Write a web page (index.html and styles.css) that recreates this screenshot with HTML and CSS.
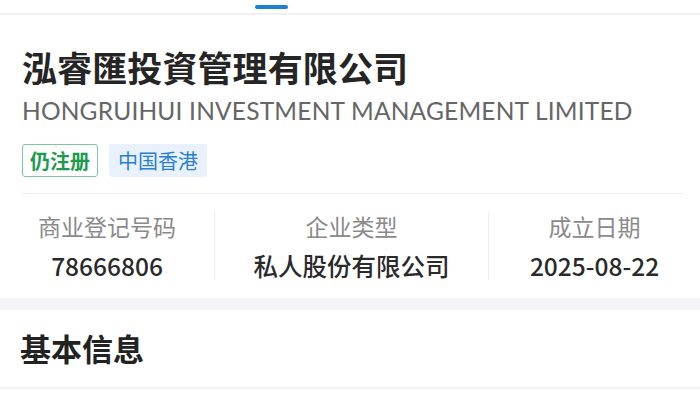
FILE: index.html
```html
<!DOCTYPE html>
<html lang="zh">

<head>
    <meta charset="utf-8">
    <title>泓睿匯投資管理有限公司</title>
    <link rel="stylesheet" href="styles.css">
</head>

<body>
    <div class="tabs">
        <span class="tab-line"></span>
    </div>

    <div class="company">
        <h1 class="name">泓睿匯投資管理有限公司</h1>
        <div class="name-en">HONGRUIHUI INVESTMENT MANAGEMENT LIMITED</div>
        <div class="tags">
            <span class="tag tag-green">仍注册</span>
            <span class="tag tag-blue">中国香港</span>
        </div>

        <div class="stats">
            <div class="stat">
                <span class="stat-label">商业登记号码</span>
                <span class="stat-value">78666806</span>
            </div>
            <div class="stat">
                <span class="stat-label">企业类型</span>
                <span class="stat-value">私人股份有限公司</span>
            </div>
            <div class="stat">
                <span class="stat-label">成立日期</span>
                <span class="stat-value">2025-08-22</span>
            </div>
        </div>
    </div>

    <div class="section">
        <h2>基本信息</h2>
    </div>
</body>
</html>
```

FILE: styles.css
```css
body {
    margin: 0;
    background-color: #fff;
    font-family: "Noto Sans CJK SC", "Noto Sans", sans-serif;
    color: #222;
    overflow: hidden;
}

.tabs {
    height: 13px;
    border-bottom: 2px solid #f1f1f1;
    position: relative;
}

.tab-line {
    position: absolute;
    left: 255px;
    top: 5px;
    width: 33px;
    height: 4px;
    border-radius: 2px;
    background-color: #1e7fd6;
}

.company {
    padding: 0 16px;
    border-bottom: 12px solid #f5f4f7;
}

.name {
    margin: 32px 0 0 6px;
    font-size: 35px;
    line-height: 40px;
    font-weight: bold;
    color: #252525;
    letter-spacing: 0.1px;
}

.name-en {
    margin: 10px 0 0 6px;
    font-family: "Lato", "Noto Sans", sans-serif;
    font-size: 24.5px;
    line-height: 28px;
    color: #666;
    letter-spacing: 0.2px;
}

.tags {
    display: flex;
    gap: 11px;
    margin: 19px 0 0 6px;
    padding-bottom: 16px;
    border-bottom: 1px solid #efefef;
}

.tag {
    height: 33px;
    line-height: 33px;
    font-size: 20px;
    padding: 0 9px;
    border-radius: 3px;
    box-sizing: border-box;
}

.tag-green {
    color: #1e9a4e;
    font-weight: bold;
    border: 1px solid #7cc79b;
    line-height: 31px;
    padding: 0 7px;
}

.tag-blue {
    color: #2a7fd1;
    background-color: #e9f2fc;
}

.stats {
    display: flex;
    margin: 0 -16px;
    padding: 18px 0;
}

.stat {
    flex: 1;
    display: flex;
    flex-direction: column;
    align-items: center;
    gap: 12px;
}

.stat + .stat {
    border-left: 1px solid #eeeeee;
}

.stat:first-child {
    flex: 0 0 214px;
}

.stat:nth-child(2) {
    flex: 0 0 273px;
}

.stat-label {
    font-size: 23px;
    line-height: 28px;
    color: #8a8a8a;
}

.stat-value {
    font-size: 24.5px;
    line-height: 28px;
    font-weight: 500;
    color: #2a2a2a;
}

.section {
    padding: 20px 20px 21px;
    border-bottom: 2px solid #f1f1f1;
}

.section h2 {
    margin: 0;
    font-size: 31px;
    line-height: 36px;
    font-weight: bold;
    color: #222;
}
```
